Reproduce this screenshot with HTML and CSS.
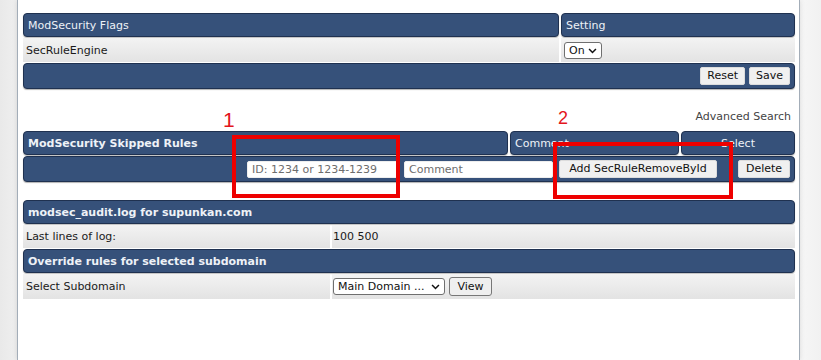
FILE: index.html
```html
<!DOCTYPE html>
<html>
<head>
<meta charset="utf-8">
<link rel="stylesheet" href="styles.css">
</head>
<body>
<div class="page">
  <div class="tbl">
    <div class="hrow">
      <div class="hcell fl-c1">ModSecurity Flags</div>
      <div class="hcell grow">Setting</div>
    </div>
    <div class="row">
      <div class="cell fl-c1">SecRuleEngine</div>
      <div class="cell grow pad-s">
        <span class="selwrap sel-on"><select class="sel"><option>On</option></select><svg class="chev" viewBox="0 0 10 7" width="9" height="6"><path d="M1 1.2 L5 5.2 L9 1.2" fill="none" stroke="#111" stroke-width="1.8"/></svg></span>
      </div>
    </div>
    <div class="bar bar-end">
      <button class="btn">Reset</button>
      <button class="btn">Save</button>
    </div>
  </div>

  <div class="adv">Advanced Search</div>

  <div class="tbl">
    <div class="hrow">
      <div class="hcell bold sk-c1">ModSecurity Skipped Rules</div>
      <div class="hcell sk-c2">Comment</div>
      <div class="hcell grow center">Select</div>
    </div>
    <div class="bar bar-end inputs">
      <input class="inp inp-id" placeholder="ID: 1234 or 1234-1239">
      <input class="inp inp-comment" placeholder="Comment">
      <button class="btn btn-add">Add SecRuleRemoveById</button>
      <button class="btn btn-del">Delete</button>
    </div>
  </div>

  <div class="tbl tbl-log">
    <div class="hrow">
      <div class="hcell bold grow">modsec_audit.log for supunkan.com</div>
    </div>
    <div class="row row-log">
      <div class="cell lg-c1">Last lines of log:</div>
      <div class="cell grow pad-xs">100 500</div>
    </div>
    <div class="hrow">
      <div class="hcell bold grow">Override rules for selected subdomain</div>
    </div>
    <div class="row row-sub">
      <div class="cell lg-c1">Select Subdomain</div>
      <div class="cell grow pad-xs">
        <span class="selwrap sel-dom"><select class="sel"><option>Main Domain ...</option></select><svg class="chev" viewBox="0 0 10 7" width="9" height="6"><path d="M1 1.2 L5 5.2 L9 1.2" fill="none" stroke="#111" stroke-width="1.8"/></svg></span>
        <button class="btn btn-view">View</button>
      </div>
    </div>
  </div>

  <div class="mark mark-1">1</div>
  <div class="mark mark-2">2</div>
  <div class="box box-1"></div>
  <div class="box box-2"></div>
</div>
</body>
</html>
```

FILE: styles.css
```css
* { box-sizing: border-box; }
html, body { margin: 0; padding: 0; }
body {
  background: linear-gradient(to right, #e9e9e9 0, #efefef 17px, #f6f6f6 800px, #f1f1f1 821px);
  height: 360px;
  overflow: hidden;
  font-family: "DejaVu Sans", Verdana, sans-serif;
  font-size: 11px;
  color: #222;
}
.page {
  position: relative;
  margin-left: 17px;
  width: 783px;
  min-height: 360px;
  background: #fff;
  border-left: 1px solid #a3adb8;
  border-right: 1px solid #a3adb8;
  box-shadow: 0 0 5px rgba(0,0,0,0.12);
  padding: 13px 4px 0 5px;
}
.tbl { display: flex; flex-direction: column; gap: 1px; }
.hrow, .row { display: flex; gap: 2px; }
.hcell {
  height: 24px;
  background: #36517a;
  border: 1px solid #1f3150;
  border-radius: 4px;
  box-shadow: 0 1px 1px rgba(0,0,0,0.25);
  color: #eef2f7;
  padding: 1px 4px 0 4px;
  display: flex;
  align-items: center;
  white-space: nowrap;
  overflow: hidden;
}
.bold { font-weight: bold; }
.center { justify-content: center; }
.grow { flex: 1 1 auto; }
.fl-c1 { flex: none; width: 536px; }
.sk-c1 { flex: none; width: 485px; }
.sk-c2 { flex: none; width: 169px; }
.lg-c1 { flex: none; width: 307px; }
.row { height: 24px; }
.cell {
  background: linear-gradient(#f3f3f3, #e3e3e3);
  display: flex;
  align-items: center;
  padding: 0 3px;
  color: #1a1a1a;
}
.pad-s { padding-left: 3px; }
.pad-xs { padding-left: 1px; gap: 4px; }
.bar {
  height: 26px;
  background: #36517a;
  border: 1px solid #1f3150;
  border-radius: 4px;
  box-shadow: 0 1px 1px rgba(0,0,0,0.3);
  display: flex;
  align-items: center;
}
.bar-end { justify-content: flex-end; padding-right: 4px; gap: 4px; }
.btn {
  font-family: "DejaVu Sans", Verdana, sans-serif;
  font-size: 11px;
  color: #111;
  height: 18px;
  padding: 0 6px;
  background: #efefef;
  border: 1px solid #8a8a8a;
  border-radius: 2px;
  line-height: 16px;
}
.bar .btn { border-color: #dcdcdc; background: #f0f0f0; }
.btn-add { width: 158px; margin-left: 2px; }
.btn-del { width: 52px; margin-left: 17px; }
.btn-view { height: 19px; width: 43px; padding: 0; border-color: #777; border-radius: 3px; }
.inp {
  height: 17px;
  font-family: "DejaVu Sans", Verdana, sans-serif;
  font-size: 11px;
  border: 1px solid #eeeeee;
  border-radius: 2px;
  background: #fff;
  padding: 0 4px;
  color: #222;
}
.inp::placeholder { color: #6d6d6d; }
.inp-id { width: 153px; }
.inp-comment { width: 149px; }
.selwrap { position: relative; display: inline-block; height: 17px; }
.sel {
  appearance: none;
  -webkit-appearance: none;
  height: 17px;
  font-family: "DejaVu Sans", Verdana, sans-serif;
  font-size: 11px;
  color: #111;
  background: #fff;
  border: 1px solid #6f6f6f;
  border-radius: 3px;
  padding: 0 0 0 4px;
  margin: 0;
}
.sel-on .sel { width: 38px; }
.sel-dom .sel { width: 112px; }
.chev { position: absolute; right: 5px; top: 6px; }
.adv {
  text-align: right;
  padding-right: 4px;
  height: 14px;
  margin-top: 21px;
  margin-bottom: 7px;
  color: #444;
}
.tbl-log { margin-top: 18px; }
.row-log { height: 23px; }
.row-sub { height: 25px; }
.mark {
  position: absolute;
  font-family: "Liberation Sans", Arial, sans-serif;
  color: #e3161c;
  line-height: 1;
}
.mark-1 { left: 205px; top: 109px; font-size: 21px; }
.mark-2 { left: 540px; top: 109px; font-size: 18px; }
.box {
  position: absolute;
  border: 4px solid #ee0000;
}
.box-1 { left: 214px; top: 135px; width: 168px; height: 63px; }
.box-2 { left: 535px; top: 142px; width: 180px; height: 57px; }
```
